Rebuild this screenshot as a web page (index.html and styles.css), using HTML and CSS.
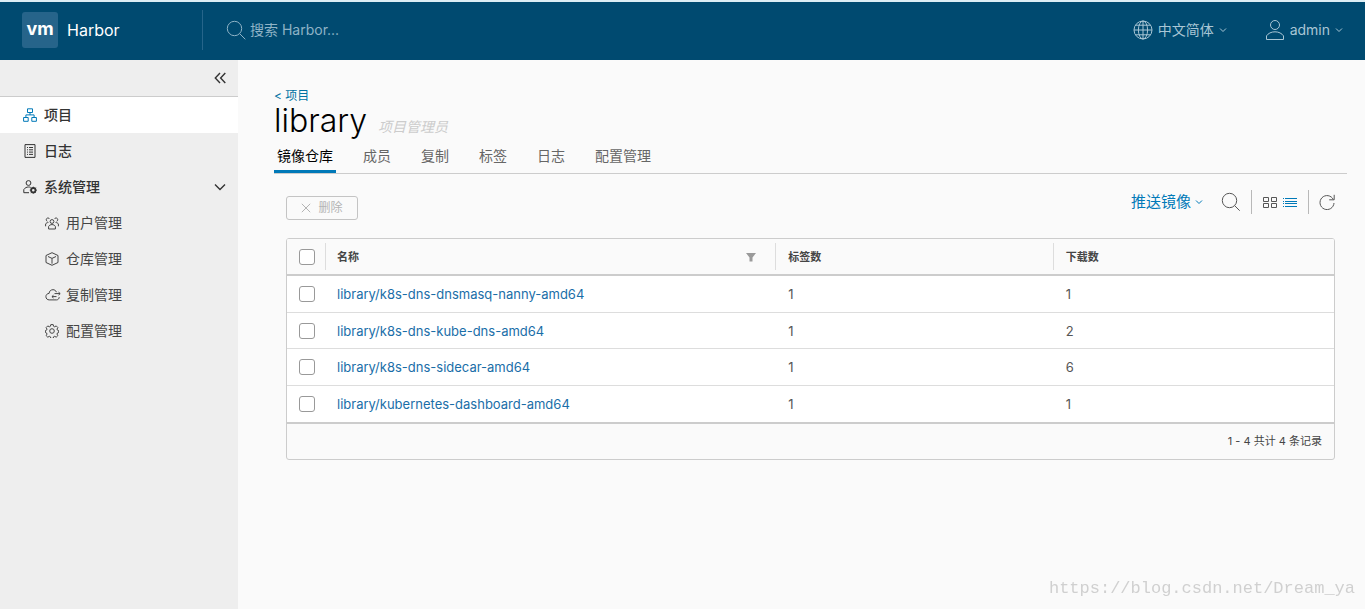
FILE: index.html
```html
<!DOCTYPE html>
<html lang="zh-CN">
<head>
<meta charset="utf-8">
<title>Harbor</title>
<link rel="stylesheet" href="styles.css">
</head>
<body>
<header class="header">
  <a class="brand" href="#"><span class="brand-logo">vm</span><span class="brand-name">Harbor</span></a>
  <label class="search">
    <svg class="icon-lg" viewBox="0 0 20 20"><circle cx="8.5" cy="8.5" r="7.2"/><path d="M13.7 13.7l5.6 5.6"/></svg>
    <input class="search-input" type="text" aria-label="搜索 Harbor" placeholder="搜索 Harbor...">
  </label>
  <div class="header-actions">
    <button class="header-button" type="button">
      <svg class="icon-lg" viewBox="0 0 20 20"><circle cx="10" cy="10" r="9"/><ellipse cx="10" cy="10" rx="4.6" ry="9"/><path d="M10 1v18M1 10h18M2.7 5.2h14.6M2.7 14.8h14.6"/></svg>
      <span>中文简体</span>
      <svg class="caret" viewBox="0 0 8 8"><path d="M1 2.5l3 3 3-3"/></svg>
    </button>
    <button class="header-button" type="button">
      <svg class="icon-user" viewBox="0 0 20 22"><circle cx="10" cy="6" r="4.5"/><path d="M1.5 20.5v-3.6c1.6-2.500 4.800-4.100 8.500-4.100s6.900 1.600 8.500 4.100v3.600z"/></svg>
      <span>admin</span>
      <svg class="caret" viewBox="0 0 8 8"><path d="M1 2.500l3 3 3-3"/></svg>
    </button>
  </div>
</header>
<div class="layout">
  <nav class="sidebar">
    <div class="sidebar-toggle">
      <button class="icon-button" type="button" aria-label="折叠">
        <svg class="icon-md icon-bold" viewBox="0 0 14 14"><path d="M7 2L2.300 7 7 12M12.300 2L7.600 7l4.700 5"/></svg>
      </button>
    </div>
    <a class="nav-item nav-active" href="#">
      <svg class="icon-md icon-blue" viewBox="0 0 14 14"><path d="M4.500.8h5v3.700h-5zM.6 9.500h4.600v3.800H.6zM8.800 9.500h4.600v3.800H8.800zM7 4.500v2.400M2.900 9.500V6.900h8.200v2.600"/></svg>
      <span>项目</span>
    </a>
    <a class="nav-item" href="#">
      <svg class="icon-md" viewBox="0 0 14 14"><path d="M2 .6h10v12.800H2zM4 3.500h1M6 3.500h4M4 5.800h1M6 5.800h4M4 8.100h1M6 8.100h4M4 10.400h1M6 10.400h4"/></svg>
      <span>日志</span>
    </a>
    <button class="nav-item" type="button">
      <svg class="icon-md" viewBox="0 0 14 14"><circle cx="5.500" cy="3" r="2.400"/><path d="M6 12.700H.8V9.600C1.900 7.800 3.600 7 5.500 7c.8 0 1.400.1 2 .3"/><circle cx="10.300" cy="10.200" r="2.200" stroke-width="1.800"/><path d="M10.300 6.700v1M10.300 12.700v1M6.800 10.200h1M12.800 10.200h1M7.800 7.700l.7.700M12.100 12l.7.700M12.800 7.700l-.7.700M8.500 12l-.7.700"/></svg>
      <span>系统管理</span>
      <svg class="nav-caret icon-bold" viewBox="0 0 12 12"><path d="M1 3.500l5 5 5-5"/></svg>
    </button>
    <a class="nav-item nav-child" href="#">
      <svg class="icon-md" viewBox="0 0 14 14"><circle cx="7" cy="5.500" r="1.900"/><path d="M3.600 13v-2.500C4.300 9.200 5.500 8.600 7 8.600s2.700.6 3.400 1.900V13zM2.400 5.300A1.700 1.700 0 1 1 4.500 3M11.600 5.300A1.700 1.700 0 1 0 9.500 3M.6 10.300V8c.6-1 1.500-1.500 2.800-1.500M13.400 10.300V8c-.6-1-1.500-1.500-2.800-1.500"/></svg>
      <span>用户管理</span>
    </a>
    <a class="nav-item nav-child" href="#">
      <svg class="icon-md" viewBox="0 0 14 14"><path d="M7 .7l6 2.800v7L7 13.300l-6-2.800v-7zM3 4.500l4 1.900 4-1.900M7 6.400v5.300"/></svg>
      <span>仓库管理</span>
    </a>
    <a class="nav-item nav-child" href="#">
      <svg class="icon-cloud" viewBox="0 0 16 14"><path d="M11.500 4.200C10.800 2.500 9.500 1.700 8 1.700c-2.200 0-3.800 1.500-3.900 3.700C2.200 5.500.9 6.800.9 8.600c0 2 1.400 3.300 3.300 3.300h7.300c1.500 0 2.700-1.200 2.700-2.800M9.500 5.600h5.500M13.500 4.100L15.200 5.600l-1.700 1.500M11.500 8.600H7M8.500 7.200L6.900 8.600 8.500 10"/></svg>
      <span>复制管理</span>
    </a>
    <a class="nav-item nav-child" href="#">
      <svg class="icon-md" viewBox="0 0 14 14"><circle cx="7" cy="7" r="2.300"/><path d="M5.800.6h2.400l.4 1.700 1.100.5 1.500-.9 1.700 1.700-.9 1.500.5 1.100 1.200.4v1.900l-1.200.4-.5 1.200.9 1.400-1.700 1.700-1.500-.9-1.100.5-.4 1.600H5.800l-.4-1.600-1.100-.5-1.500.9-1.700-1.700.9-1.400-.5-1.200L.4 8.500V6.600l1.100-.4.5-1.100-.9-1.500 1.700-1.700 1.500.9 1.100-.5z"/></svg>
      <span>配置管理</span>
    </a>
  </nav>
  <main class="content">
    <a class="back-link" href="#">&lt; 项目</a>
    <div class="title-row"><h1 class="title">library</h1><em class="role">项目管理员</em></div>
    <div class="tabs" role="tablist">
      <button class="tab tab-active" type="button" role="tab" aria-selected="true">镜像仓库</button>
      <button class="tab" type="button" role="tab">成员</button>
      <button class="tab" type="button" role="tab">复制</button>
      <button class="tab" type="button" role="tab">标签</button>
      <button class="tab" type="button" role="tab">日志</button>
      <button class="tab" type="button" role="tab">配置管理</button>
    </div>
    <section class="panel">
      <div class="toolbar">
        <button class="delete-button" type="button" disabled>
          <svg class="icon-x" viewBox="0 0 10 10"><path d="M.8.8l8.400 8.400M9.200.8L.8 9.200"/></svg>
          <span>删除</span>
        </button>
        <div class="tools">
          <button class="push-button" type="button"><span>推送镜像</span><svg class="caret" viewBox="0 0 8 8"><path d="M1 2.500l3 3 3-3"/></svg></button>
          <button class="icon-button" type="button" aria-label="搜索"><svg class="icon-lg" viewBox="0 0 20 20"><circle cx="8.500" cy="8.500" r="7.200"/><path d="M13.700 13.700l5 5"/></svg></button>
          <div class="view-switch">
            <button class="icon-button" type="button" aria-label="卡片视图"><svg class="icon-md" viewBox="0 0 14 14"><path d="M.5 2.500h5v4h-5zM8.500 2.500h5v4h-5zM.5 8.500h5v4h-5zM8.500 8.500h5v4h-5z"/></svg></button>
            <button class="icon-button icon-blue" type="button" aria-label="列表视图"><svg class="icon-md" viewBox="0 0 14 14"><path d="M0 3.500h1M2 3.500h12M0 6.500h1M2 6.500h12M0 8.500h1M2 8.500h12M0 11.500h1M2 11.500h12"/></svg></button>
          </div>
          <button class="icon-button" type="button" aria-label="刷新"><svg class="icon-refresh" viewBox="0 0 16 16"><path d="M14.300 5.500A7 7 0 1 0 15 9M15.200.8v5h-5"/></svg></button>
        </div>
      </div>
      <div class="grid">
        <table class="table">
          <colgroup><col class="col-check"><col class="col-name"><col class="col-tags"><col></colgroup>
          <thead>
            <tr>
              <th class="check-cell"><input class="check" type="checkbox" aria-label="全选"></th>
              <th><div class="head-cell"><span>名称</span><button class="filter" type="button" aria-label="筛选"><svg class="icon-filter" viewBox="0 0 10 10"><path d="M0 1h10L6.500 5.500v4h-3v-4z"/></svg></button></div></th>
              <th><div class="head-cell">标签数</div></th>
              <th><div class="head-cell">下载数</div></th>
            </tr>
          </thead>
          <tbody>
            <tr><td class="check-cell"><input class="check" type="checkbox" aria-label="library/k8s-dns-dnsmasq-nanny-amd64"></td><td><a class="repo" href="#">library/k8s-dns-dnsmasq-nanny-amd64</a></td><td>1</td><td>1</td></tr>
            <tr><td class="check-cell"><input class="check" type="checkbox" aria-label="library/k8s-dns-kube-dns-amd64"></td><td><a class="repo" href="#">library/k8s-dns-kube-dns-amd64</a></td><td>1</td><td>2</td></tr>
            <tr><td class="check-cell"><input class="check" type="checkbox" aria-label="library/k8s-dns-sidecar-amd64"></td><td><a class="repo" href="#">library/k8s-dns-sidecar-amd64</a></td><td>1</td><td>6</td></tr>
            <tr><td class="check-cell"><input class="check" type="checkbox" aria-label="library/kubernetes-dashboard-amd64"></td><td><a class="repo" href="#">library/kubernetes-dashboard-amd64</a></td><td>1</td><td>1</td></tr>
          </tbody>
        </table>
        <div class="grid-footer">1 - 4 共计 4 条记录</div>
      </div>
    </section>
  </main>
</div>
<div class="watermark">https://blog.csdn.net/Dream_ya</div>
</body>
</html>
```

FILE: styles.css
```css
* { box-sizing: border-box; }
body {
  margin: 0;
  min-height: 100vh;
  display: flex;
  flex-direction: column;
  background: #fafafa;
  color: #565656;
  font: 13px/24px Inter, "Noto Sans CJK SC", sans-serif;
}
button { margin: 0; padding: 0; border: 0; background: none; color: inherit; font: inherit; }
a { text-decoration: none; color: inherit; }
svg { display: block; flex: none; fill: none; stroke: currentColor; stroke-width: 1; }

.header {
  display: flex;
  align-items: center;
  height: 60px;
  padding-bottom: 2px;
  border-top: 2px solid #dceef5;
  background: #004a70;
  color: #a9c6d5;
  font-size: 14px;
}
.brand {
  display: flex;
  align-items: center;
  gap: 9px;
  width: 203px;
  height: 40px;
  padding-left: 22px;
  border-right: 1px solid #26658a;
  color: #fff;
}
.brand-logo {
  width: 36px;
  height: 36px;
  border-radius: 3px;
  background: #26648a;
  text-align: center;
  font: bold 18px/34px Inter, sans-serif;
}
.brand-name { font-size: 16px; }
.search { display: flex; align-items: center; gap: 4px; flex: 1; padding-left: 23px; color: #8fb3c6; }
.search-input { flex: 1; padding: 0; border: 0; outline: 0; background: none; color: #fff; font: inherit; }
.search-input::placeholder { color: #8fb3c6; opacity: 1; }
.header-actions { display: flex; gap: 38px; padding-right: 22px; }
.header-button { display: flex; align-items: center; gap: 5px; }
.icon-lg { width: 20px; height: 20px; }
.icon-user { width: 20px; height: 22px; }
.icon-md { width: 14px; height: 14px; }
.icon-cloud { width: 16px; height: 14px; }
.icon-refresh { width: 16px; height: 16px; }
.icon-x { width: 10px; height: 10px; }
.icon-blue { color: #0079b8; }
.icon-bold { stroke-width: 1.4; }
.caret { width: 8px; height: 8px; }

.layout { display: flex; flex: 1; }
.sidebar { width: 238px; flex: none; background: #eee; color: #333; }
.sidebar-toggle { display: flex; justify-content: flex-end; align-items: center; height: 37px; padding-right: 11px; border-bottom: 1px solid #ccc; }
.nav-item {
  display: flex;
  align-items: center;
  gap: 7px;
  width: 100%;
  height: 36px;
  padding: 0 12px 0 23px;
  font-size: 14px;
  font-weight: 500;
}
.nav-active { background: #fff; }
.nav-child { padding-left: 45px; font-weight: 400; color: #454545; }
.nav-caret { width: 12px; height: 12px; margin-left: auto; }
.icon-button { display: flex; align-items: center; }
.icon-cloud { margin-right: -2px; }

.content { flex: 1; min-width: 0; padding: 28px 18px 0 36px; }
.back-link { display: block; color: #0072a3; font-size: 12px; line-height: 16px; }
.title-row { display: flex; align-items: baseline; gap: 11px; height: 36px; }
.title { margin: 0; color: #000; font-size: 32px; font-weight: 300; line-height: 34px; }
.role { color: #ccc; font-size: 14px; }
.tabs { display: flex; gap: 24px; border-bottom: 1px solid #ccc; }
.tab { height: 33px; padding: 1px 3px 0; border-bottom: 3px solid transparent; font-size: 14px; line-height: 29px; color: #666; }
.tab-active { border-color: #0079b8; color: #000; }

.panel { padding: 16px 12px 0; }
.toolbar { display: flex; justify-content: space-between; align-items: flex-end; padding-bottom: 18px; }
.delete-button {
  display: flex;
  justify-content: center;
  align-items: center;
  gap: 7px;
  width: 72px;
  height: 24px;
  border: 1px solid #c4c4c4;
  border-radius: 3px;
  color: #b4b4b4;
  font-size: 12px;
}
.tools { display: flex; align-items: center; height: 24px; margin-bottom: 6px; }
.push-button { display: flex; align-items: center; gap: 4px; margin-right: 18px; color: #0079b8; font-size: 15px; }
.view-switch { display: flex; align-items: center; gap: 6px; height: 24px; margin: 0 10px; padding: 0 11px; border: solid #b8b8b8; border-width: 0 1px; }

.grid { overflow: hidden; border: 1px solid #ccc; border-radius: 3px; }
.table { width: 100%; table-layout: fixed; border-collapse: separate; border-spacing: 0; background: #fff; }
.col-check { width: 38px; }
.col-name { width: 43%; }
.col-tags { width: 26.5%; }
.table th { height: 37px; padding: 0; border-bottom: 2px solid #ccc; background: #fafafa; color: #454545; font-size: 11px; font-weight: 600; text-align: left; }
.table td { height: 37px; padding: 0 13px; border-bottom: 1px solid #ddd; }
.table td:nth-child(2) { padding-left: 12px; }
.table tbody tr:nth-child(even) td { height: 36px; }
.table tbody tr:last-child td { border-bottom: 0; }
.table .check-cell { padding: 0 0 0 12px; }
.head-cell { display: flex; align-items: center; justify-content: space-between; height: 27px; padding: 0 19px 0 12px; border-left: 1px solid #ddd; }
.table th:nth-child(2) .head-cell { padding-left: 11px; }
.check { display: block; width: 16px; height: 16px; margin: 0; appearance: none; border: 1px solid #999; border-radius: 3px; background: #fff; }
.filter { display: flex; }
.icon-filter { width: 10px; height: 10px; fill: #9a9a9a; stroke: none; }
.repo { color: #1a6ea8; }
.grid-footer { padding: 5px 12px 6px; border-top: 2px solid #ccc; font-size: 11px; text-align: right; color: #454545; }

.watermark { position: fixed; right: 10px; bottom: 8px; color: #d0d0d0; font: 17px/24px "Liberation Mono", monospace; }
```
